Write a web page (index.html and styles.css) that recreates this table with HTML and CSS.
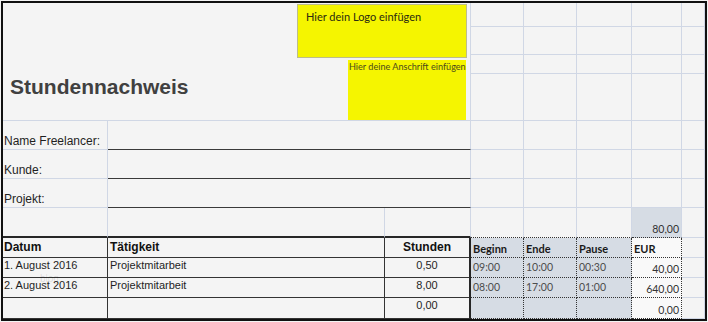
FILE: index.html
```html
<!DOCTYPE html>
<html lang="de">
<head>
    <meta charset="UTF-8">
    <meta name="viewport" content="width=device-width, initial-scale=1.0">
    <title>Stundennachweis</title>
    <link rel="stylesheet" href="styles.css">
</head>
<body>
    <div class="sheet">
        <!-- Kopfbereich: Titel, Logo und Anschrift -->
        <div class="cell head">
            <h1 class="title">Stundennachweis</h1>
            <div class="boxes">
                <div class="logo">Hier dein Logo einfügen</div>
                <div class="address">Hier deine Anschrift einfügen</div>
            </div>
        </div>
        <div class="cell"></div><div class="cell"></div><div class="cell"></div><div class="cell"></div><div class="cell"></div>
        <div class="cell"></div><div class="cell"></div><div class="cell"></div><div class="cell"></div><div class="cell"></div>
        <div class="cell"></div><div class="cell"></div><div class="cell"></div><div class="cell"></div><div class="cell"></div>
        <div class="cell"></div><div class="cell"></div><div class="cell"></div><div class="cell"></div><div class="cell"></div>

        <!-- Stammdaten -->
        <div class="cell label">Name Freelancer:</div>
        <div class="cell field"></div>
        <div class="cell"></div><div class="cell"></div><div class="cell"></div><div class="cell"></div><div class="cell"></div>

        <div class="cell label">Kunde:</div>
        <div class="cell field"></div>
        <div class="cell"></div><div class="cell"></div><div class="cell"></div><div class="cell"></div><div class="cell"></div>

        <div class="cell label">Projekt:</div>
        <div class="cell field"></div>
        <div class="cell"></div><div class="cell"></div><div class="cell"></div><div class="cell"></div><div class="cell"></div>

        <div class="cell rule"></div><div class="cell rule"></div><div class="cell rule"></div>
        <div class="cell pre"></div><div class="cell pre"></div><div class="cell pre"></div>
        <div class="cell pre total">80,00</div>
        <div class="cell"></div>

        <!-- Zeiterfassung -->
        <div class="cell td th">Datum</div>
        <div class="cell td th desc">Tätigkeit</div>
        <div class="cell td th hours">Stunden</div>
        <div class="cell tm th">Beginn</div>
        <div class="cell tm th">Ende</div>
        <div class="cell tm th">Pause</div>
        <div class="cell eur th">EUR</div>
        <div class="cell"></div>

        <div class="cell td">1. August 2016</div>
        <div class="cell td desc">Projektmitarbeit</div>
        <div class="cell td hours">0,50</div>
        <div class="cell tm">09:00</div>
        <div class="cell tm">10:00</div>
        <div class="cell tm">00:30</div>
        <div class="cell eur">40,00</div>
        <div class="cell"></div>

        <div class="cell td">2. August 2016</div>
        <div class="cell td desc">Projektmitarbeit</div>
        <div class="cell td hours">8,00</div>
        <div class="cell tm">08:00</div>
        <div class="cell tm">17:00</div>
        <div class="cell tm">01:00</div>
        <div class="cell eur">640,00</div>
        <div class="cell"></div>

        <div class="cell td"></div>
        <div class="cell td desc"></div>
        <div class="cell td hours">0,00</div>
        <div class="cell tm"></div>
        <div class="cell tm"></div>
        <div class="cell tm"></div>
        <div class="cell eur">0,00</div>
        <div class="cell"></div>

        <span class="mark">blog</span>
    </div>
</body>
</html>
```

FILE: styles.css
```css
body {
    margin: 0;
    background-color: #f4f4f4;
    font-family: "Liberation Sans", Arial, sans-serif;
    color: #1f1f1f;
}
.sheet {
    position: relative;
    margin: 1px;
    width: 702px;
    height: 316px;
    border: 2px solid #111;
    display: grid;
    grid-template-columns: 105px 277px 86px 53px 53px 55px 50px 1fr;
    grid-template-rows: 24px 28px 19px 47px 29px 29px 29px 30px 20px 20px 20px 1fr;
    background-color: #f4f4f4;
}
.cell {
    box-sizing: border-box;
    border-right: 1px solid #d0d7e5;
    border-bottom: 1px solid #d0d7e5;
    min-width: 0;
    overflow: hidden;
    white-space: nowrap;
}
.head {
    grid-column: 1 / 4;
    grid-row: 1 / 5;
    display: flex;
    justify-content: space-between;
    align-items: flex-start;
    overflow: visible;
}
.title {
    margin: 72px 0 0 7px;
    font-size: 21px;
    line-height: 24px;
    font-weight: bold;
    color: #404040;
}
.boxes {
    display: flex;
    flex-direction: column;
    align-items: flex-end;
    padding-right: 3px;
}
.logo {
    box-sizing: border-box;
    width: 170px;
    height: 54px;
    margin-top: 1px;
    padding: 5px 0 0 8px;
    background-color: #f5f500;
    border: 1px solid #bdbd8a;
    font-family: Lato, sans-serif;
    font-size: 11px;
    line-height: 14px;
    color: #2a2a10;
}
.address {
    box-sizing: border-box;
    width: 118px;
    height: 60px;
    margin: 2px 1px 0 0;
    padding: 1px 0 0 1px;
    background-color: #f5f500;
    font-family: Lato, sans-serif;
    font-size: 9.1px;
    line-height: 12px;
    color: #4a4a1c;
    overflow: hidden;
    white-space: nowrap;
}
.label {
    display: flex;
    align-items: flex-end;
    padding: 0 0 1px 1px;
    font-size: 12px;
    line-height: 14px;
}
.field {
    grid-column: span 2;
    border-bottom-color: #3a3a3a;
}
.rule {
    border-bottom: 2px solid #262626;
}
.pre {
    border-bottom: 1px dotted #333;
}
.total {
    display: flex;
    align-items: flex-end;
    justify-content: flex-end;
    padding: 0 2px 2px 0;
    background-color: #d6dce4;
    font-family: Lato, sans-serif;
    font-size: 10.5px;
    color: #333;
}

/* Tabelle links: Datum, Tätigkeit, Stunden */
.td {
    border-right: 1px solid #333;
    border-bottom: 1px solid #333;
    padding: 1px 0 0 1px;
    font-size: 11px;
    line-height: 13px;
}
.td.desc {
    padding-left: 2px;
}
.td.hours {
    border-right: 2px solid #262626;
    text-align: center;
    padding-left: 0;
}
.td.th {
    padding-top: 2px;
    font-size: 12px;
    line-height: 14px;
    font-weight: bold;
    color: #111;
}

/* Zeiten und Betrag */
.tm, .eur {
    border-right: 1px dotted #333;
    border-bottom: 1px dotted #333;
    font-family: Lato, sans-serif;
    font-size: 10.5px;
    line-height: 13px;
}
.tm {
    padding: 3px 0 0 2px;
    background-color: #d6dce4;
    color: #4d4d4d;
}
.eur {
    display: flex;
    align-items: flex-end;
    justify-content: flex-end;
    padding: 0 2px 1px 0;
    background-color: #f9f9f9;
    color: #333;
}
.tm.th, .eur.th {
    display: block;
    padding: 4px 0 0 2px;
    font-weight: bold;
    font-size: 11px;
    color: #1a1a1a;
}
.mark {
    position: absolute;
    left: 37px;
    top: 273px;
    font-size: 10px;
    line-height: 5px;
    color: rgba(0, 0, 0, 0.12);
}
```
